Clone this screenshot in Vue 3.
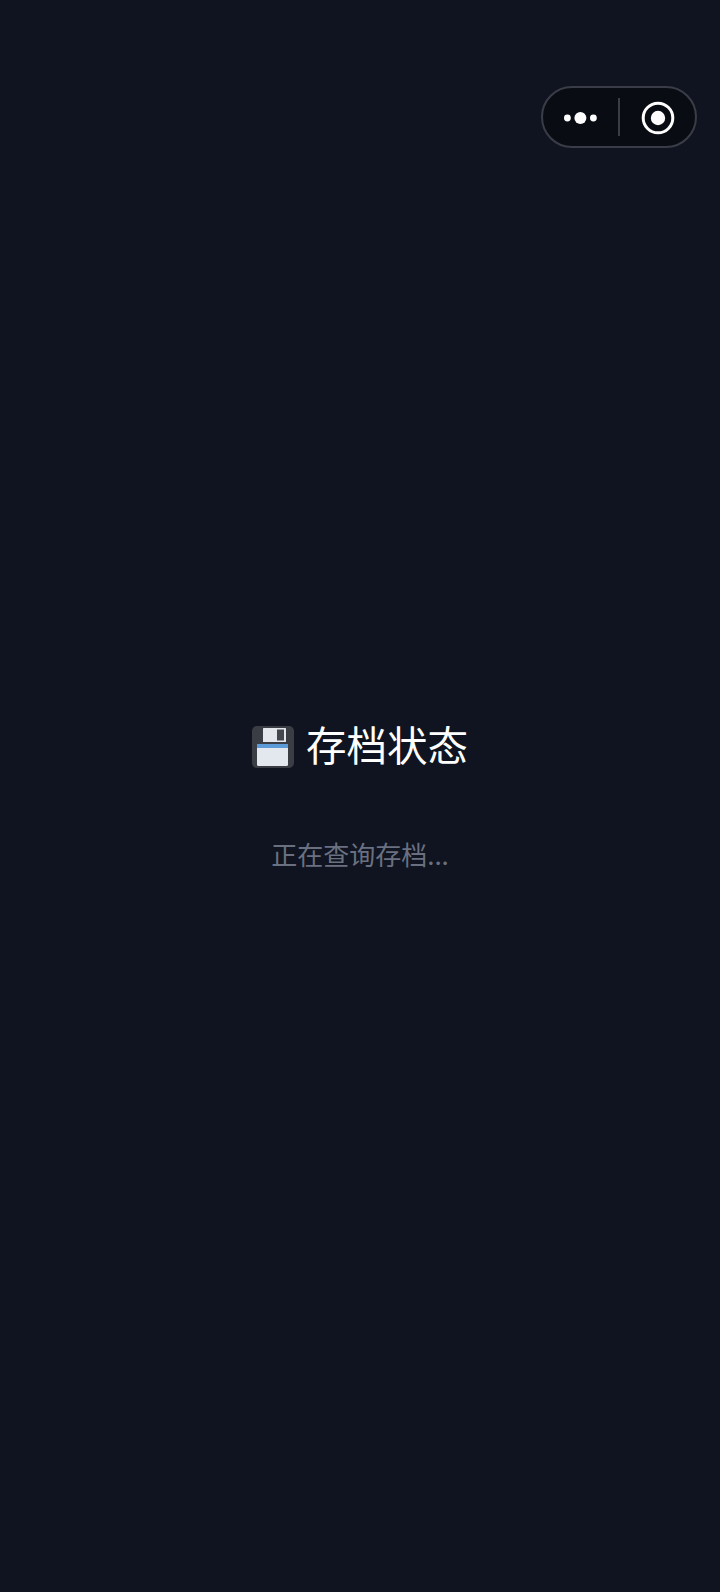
<template>
  <div class="pagina">
    <!-- Capsule menu -->
    <div class="capsula">
      <div class="capsula-lado">
        <svg class="icone-mais" viewBox="0 0 34 14" width="34" height="14">
          <circle cx="3.4" cy="7" r="3.4" fill="#fff" />
          <circle cx="16.4" cy="7" r="6" fill="#fff" />
          <circle cx="29.4" cy="7" r="3.4" fill="#fff" />
        </svg>
      </div>
      <span class="divisor"></span>
      <div class="capsula-lado">
        <svg class="icone-alvo" viewBox="0 0 34 34" width="34" height="34">
          <circle cx="17" cy="17" r="14.8" fill="none" stroke="#fff" stroke-width="3" />
          <circle cx="17" cy="17" r="7.2" fill="#fff" />
        </svg>
      </div>
    </div>

    <!-- Conteudo -->
    <div class="conteudo">
      <h1 class="titulo">
        <svg class="disquete" viewBox="0 0 42 42" width="42" height="42">
          <rect width="42" height="42" rx="5" fill="#3a3e44" />
          <rect x="11" y="2" width="23" height="14" rx="0.5" fill="#e4e7ec" />
          <rect x="25" y="3.5" width="7" height="11" fill="#44484e" />
          <rect x="5" y="18" width="31" height="22" rx="1.5" fill="#e3e8ee" />
          <rect x="5" y="18" width="31" height="4" fill="#5b9bd8" />
        </svg>
        <span class="titulo-texto">存档状态</span>
      </h1>
      <p class="mensagem">正在查询存档...</p>
    </div>
  </div>
</template>

<script setup>
</script>

<style>
body {
  background: #0f1420;
}
</style>

<style scoped>
.pagina {
  position: relative;
  height: 1592px;
  overflow: hidden;
  background: #0f1420;
  font-family: "Noto Sans CJK SC", "Noto Sans", sans-serif;
}

.capsula {
  position: absolute;
  top: 86px;
  left: 541px;
  width: 156px;
  height: 62px;
  box-sizing: border-box;
  display: flex;
  align-items: center;
  background: #090c13;
  border: 2px solid #3a3d47;
  border-radius: 31px;
}

.capsula-lado {
  flex: 1;
  display: flex;
  align-items: center;
  justify-content: center;
  padding-top: 2px;
}

.divisor {
  width: 2px;
  height: 38px;
  background: #3a3d47;
}

.conteudo {
  padding-top: 718px;
  display: flex;
  flex-direction: column;
  align-items: center;
}

.titulo {
  margin: 0;
  display: flex;
  align-items: center;
  gap: 12px;
  height: 58px;
  font-size: 40.5px;
  font-weight: 400;
  line-height: 58px;
  color: #fff;
}

.titulo-texto {
  margin-bottom: 6px;
}

.mensagem {
  margin: 59px 0 0;
  font-size: 26px;
  line-height: 38px;
  color: #6b7080;
}
</style>
